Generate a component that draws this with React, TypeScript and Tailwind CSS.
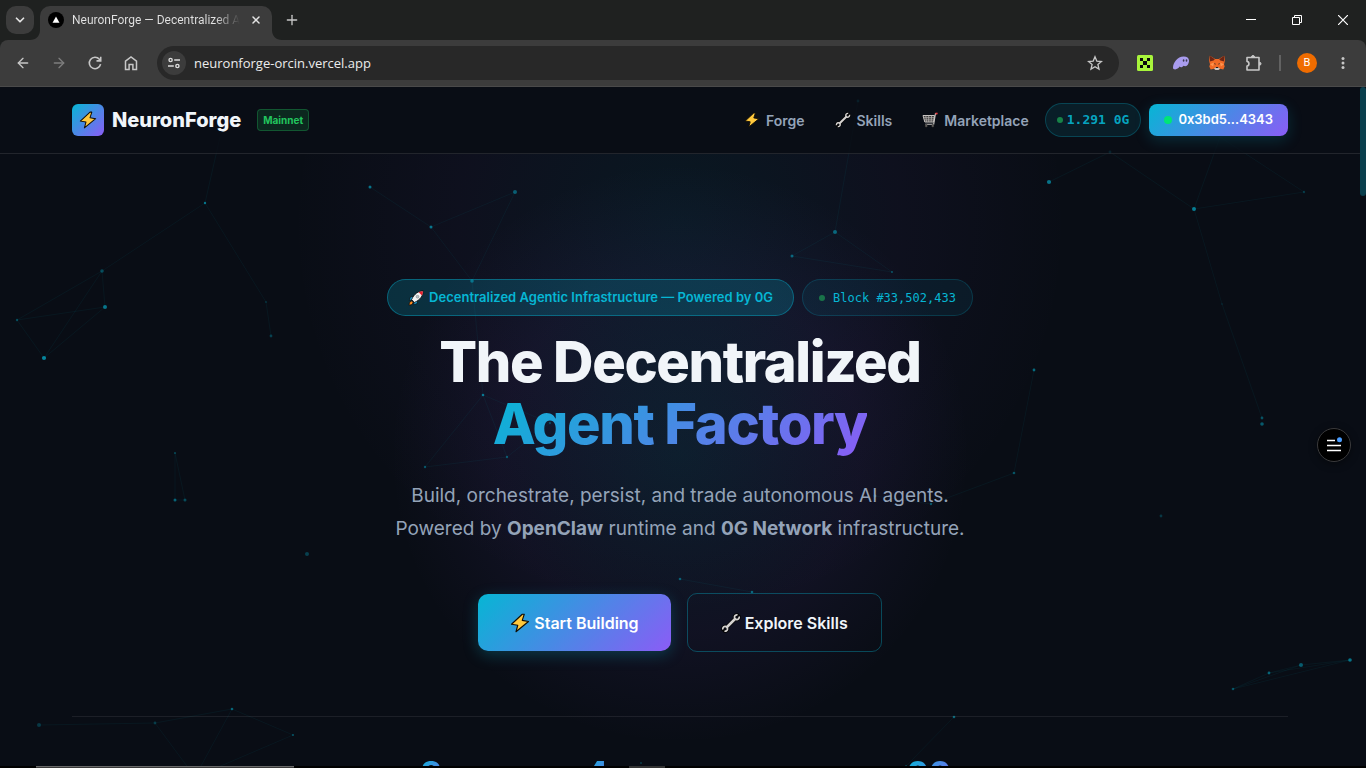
import React from 'react';
import { ArrowLeft, ArrowRight, ChevronDown, Plus, X } from 'lucide-react';

type Node = [x: number, y: number, r: number, opacity: number];

const nodes: Record<string, Node> = {
  a: [205, 116, 1.2, 0.6],
  b: [102, 184, 1.8, 0.35],
  c: [105, 220, 2, 0.6],
  d: [17, 233, 1.2, 0.35],
  e: [44, 271, 2.1, 0.7],
  f: [266, 215, 0.8, 0.35],
  g: [271, 249, 1.4, 0.3],
  h: [370, 100, 1.5, 0.6],
  i: [431, 140, 1.5, 0.6],
  j: [515, 105, 2, 0.45],
  k: [472, 194, 1.8, 0.5],
  l: [483, 308, 1.3, 0.6],
  m: [425, 380, 1.2, 0.4],
  n: [507, 370, 1.2, 0.4],
  o: [550, 336, 1.2, 0.3],
  p: [175, 366, 1, 0.35],
  q: [175, 413, 1.5, 0.5],
  r: [185, 413, 1.5, 0.35],
  s: [307, 467, 2, 0.3],
  t: [858, 14, 1.4, 0.4],
  u: [835, 145, 2, 0.5],
  v: [792, 169, 1.5, 0.5],
  w: [892, 185, 1, 0.4],
  x: [1049, 95, 2.1, 0.6],
  y: [1110, 65, 1.4, 0.5],
  z: [1194, 122, 2, 0.65],
  aa: [1304, 105, 1.2, 0.25],
  ab: [1222, 217, 0.8, 0.2],
  ac: [1034, 283, 1.4, 0.55],
  ad: [1014, 386, 1.3, 0.4],
  ae: [1262, 331, 1.4, 0.4],
  af: [1262, 337, 1.8, 0.45],
  ag: [1161, 429, 1.4, 0.25],
  ah: [875, 409, 1.4, 0.5],
  ai: [931, 417, 1.2, 0.4],
  aj: [39, 638, 2, 0.25],
  ak: [155, 636, 1.4, 0.25],
  al: [232, 622, 1.3, 0.5],
  am: [293, 648, 1.1, 0.4],
  an: [680, 492, 1.3, 0.45],
  ao: [752, 505, 1.3, 0.5],
  ap: [1233, 602, 1.3, 0.4],
  aq: [1269, 586, 1.4, 0.5],
  ar: [1301, 578, 2, 0.45],
  as: [1350, 573, 1.8, 0.6],
  at: [954, 630, 1.3, 0.5],
  au: [906, 679, 1, 0.3],
  av: [641, 676, 1.1, 0.25],
  aw: [195, 690, 1, 0],
  ax: [220, 50, 1, 0],
  ay: [1220, 50, 1, 0],
};

const links = [
  'a-b', 'a-f', 'a-ax', 'b-c', 'b-d', 'b-e', 'c-d', 'c-e', 'd-e', 'f-g',
  'h-i', 'i-j', 'i-k', 'j-k', 'k-l', 'l-m', 'l-n', 'l-o', 'm-n', 'n-o', 'p-q', 'p-r',
  'q-r', 't-u', 'u-v', 'u-w', 'v-w', 'x-y', 'y-z', 'z-aa', 'z-ay', 'ay-aa',
  'z-ab', 'ab-ae', 'ac-ad', 'ad-ai', 'ah-ai', 'aj-ak', 'ak-al', 'al-am', 'ak-aw',
  'al-aw', 'am-aw', 'an-ao', 'ap-aq', 'aq-ar', 'ar-as', 'ap-ar', 'ap-as', 'aq-as', 'at-au',
];

function Particles() {
  return (
    <svg className="pointer-events-none absolute inset-0 h-full w-full" aria-hidden="true">
      {links.map((link) => {
        const [from, to] = link.split('-').map((id) => nodes[id]);
        return (
          <line
            key={link}
            x1={from[0]}
            y1={from[1]}
            x2={to[0]}
            y2={to[1]}
            stroke="#06b6d4"
            strokeOpacity="0.06"
          />
        );
      })}
      {Object.entries(nodes).map(([id, [x, y, r, opacity]]) => (
        <circle key={id} cx={x} cy={y} r={r} fill="#06b6d4" fillOpacity={opacity} />
      ))}
    </svg>
  );
}

function Bolt({ className = 'h-4 w-4' }: { className?: string }) {
  return (
    <svg viewBox="0 0 16 16" className={className} aria-hidden="true">
      <path
        d="M9.800 1 1.200 9l5 .8L4.800 15l10-8.200-5-.9L11.400 1z"
        fill="#ffc83d"
        stroke="#120d04"
        strokeWidth="0.9"
        strokeLinejoin="round"
      />
    </svg>
  );
}

function Wrench({ className = 'h-4 w-4' }: { className?: string }) {
  const jaws = 'M13.200 1.500A1.900 1.900 0 1 0 14.500 2.800M1.500 13.200A1.900 1.900 0 1 1 2.800 14.500';
  return (
    <svg viewBox="0 0 16 16" className={className} fill="none" aria-hidden="true">
      <path d="M4 12 12 4" stroke="#050505" strokeWidth="3.200" />
      <path d={jaws} stroke="#050505" strokeWidth="2.600" strokeLinecap="round" />
      <path d={jaws} stroke="#d6d3d1" strokeWidth="1.400" />
      <path d="M4.200 11.800 11.800 4.200" stroke="#d6d3d1" strokeWidth="2" />
    </svg>
  );
}

function Cart({ className = 'h-4 w-4' }: { className?: string }) {
  return (
    <svg viewBox="0 0 16 16" className={className} fill="none" aria-hidden="true">
      <path d="M1 3.500h11.500L11.600 10H2.800z" fill="#3a3a3a" stroke="#c9c5c2" />
      <path d="M1.600 5.700h10.700M2.200 7.900h9.700M3.800 3.500l.7 6.500M6.700 3.500V10M9.600 3.500 9.100 10" stroke="#b3afac" strokeWidth="0.8" />
      <path d="M15 1.800h-1.600L11.700 12.200H3.300" stroke="#c9c5c2" strokeWidth="1.100" />
      <path d="M15.600 1.500h-2.100" stroke="#f03a3e" strokeWidth="1.600" />
      <circle cx="4.200" cy="13.900" r="1.300" fill="#6b6866" stroke="#111" strokeWidth="0.5" />
      <circle cx="10.800" cy="13.900" r="1.300" fill="#6b6866" stroke="#111" strokeWidth="0.5" />
    </svg>
  );
}

function Rocket({ className = 'h-4 w-4' }: { className?: string }) {
  return (
    <svg viewBox="0 0 16 16" className={className} aria-hidden="true">
      <path d="M3.500 11 1.500 12.500 1 15.200 3.800 14.600 5.200 12.600z" fill="#ff8a1f" stroke="#0b0b0b" strokeWidth="0.7" />
      <path d="M5.500 6.200 2.300 7.300 1.300 10.500 4.500 9.700zM9.900 10.600 8.800 13.700 5.600 14.700 6.400 11.600z" fill="#19a9e5" stroke="#0b0b0b" strokeWidth="0.7" />
      <path d="M15.200.9C10.500.8 6 4 3.600 9.600L6.500 12.400C12 10 15.300 5.600 15.200.9z" fill="#f3f3f3" stroke="#0b0b0b" strokeWidth="0.8" />
      <path d="M14.900 1.200c-1.500-.1-2.900.3-4.200 1l3.200 3.200c.7-1.300 1.100-2.700 1-4.200z" fill="#e8202e" />
      <circle cx="9.500" cy="6.700" r="1.400" fill="#b9c2c9" stroke="#777" strokeWidth="0.5" />
    </svg>
  );
}

function WindowBar() {
  return (
    <div className="flex h-10 shrink-0 bg-[#1f2120] pl-[6px]">
      <button aria-label="Search tabs" className="mt-[6px] flex h-7 w-7 items-center justify-center rounded-[10px] bg-[#3c3c3c] text-[#e3e3e3]">
        <ChevronDown className="h-[14px] w-[14px]" strokeWidth={3} />
      </button>
      <div className="relative ml-[6px] mt-[6px] flex w-[232px] items-center rounded-t-[10px] bg-[#3c3c3c] pl-2 pr-2 pb-[6px]">
        <svg className="absolute -left-[10px] bottom-0 h-[10px] w-[10px]" viewBox="0 0 10 10" aria-hidden="true">
          <path d="M10 0v10H0C6 10 10 6 10 0z" fill="#3c3c3c" />
        </svg>
        <svg className="absolute -right-[10px] bottom-0 h-[10px] w-[10px]" viewBox="0 0 10 10" aria-hidden="true">
          <path d="M0 0v10h10C4 10 0 6 0 0z" fill="#3c3c3c" />
        </svg>
        <svg viewBox="0 0 16 16" className="h-4 w-4 shrink-0" aria-hidden="true">
          <circle cx="8" cy="8" r="8" fill="#000" />
          <path d="M8 4.500 11.500 10.800h-7z" fill="#fff" />
        </svg>
        <span className="ml-2 flex-1 overflow-hidden whitespace-nowrap bg-linear-to-r from-[#e3e3e3] from-85% to-transparent bg-clip-text font-[Roboto,sans-serif] text-[12px] leading-4 text-transparent">
          NeuronForge — Decentralized A
        </span>
        <button aria-label="Close tab" className="ml-2 flex h-4 w-4 items-center justify-center text-[#e3e3e3]">
          <X className="h-3 w-3" strokeWidth={3} />
        </button>
      </div>
      <button aria-label="New tab" className="ml-[6px] flex h-10 w-7 items-center justify-center text-[#c7c7c7]">
        <Plus className="h-4 w-4" strokeWidth={2} />
      </button>
      <div className="ml-auto flex text-white">
        <button aria-label="Minimize" className="flex h-10 w-[46px] items-center justify-center">
          <svg viewBox="0 0 10 10" className="h-[10px] w-[10px]"><path d="M0 4.500h10" stroke="currentColor" /></svg>
        </button>
        <button aria-label="Restore" className="flex h-10 w-[46px] items-center justify-center">
          <svg viewBox="0 0 10 10" className="h-[10px] w-[10px]" fill="none" stroke="currentColor">
            <path d="M.5 2.500h7v7h-7zM2.500 2.500v-2h7v7h-2" />
          </svg>
        </button>
        <button aria-label="Close" className="flex h-10 w-[46px] items-center justify-center">
          <svg viewBox="0 0 10 10" className="h-[10px] w-[10px]"><path d="M0 0l10 10M10 0 0 10" stroke="currentColor" strokeWidth="1.200" /></svg>
        </button>
      </div>
    </div>
  );
}

const toolButton = 'flex h-9 w-9 shrink-0 items-center justify-center text-[#c7c7c7]';

function Toolbar() {
  return (
    <div className="shrink-0 bg-[#1f2120]">
      <div className="flex h-[47px] items-center rounded-t-lg border-b border-[#4a4a4a] bg-[#3c3c3c] px-[5px] font-['Open_Sans',sans-serif]">
        <button aria-label="Back" className={toolButton}>
          <ArrowLeft className="h-4 w-4" strokeWidth={2} />
        </button>
        <button aria-label="Forward" className="flex h-9 w-9 shrink-0 items-center justify-center text-[#7d7d7d]">
          <ArrowRight className="h-4 w-4" strokeWidth={2} />
        </button>
        <button aria-label="Reload" className={toolButton}>
          <svg viewBox="0 0 16 16" className="h-4 w-4" fill="none" stroke="currentColor" strokeWidth="1.600">
            <path d="M13.600 9.200A5.700 5.700 0 1 1 12.400 4.300L13.600 5.600" />
            <path d="M13.700 1.800v4.100H9.500" />
          </svg>
        </button>
        <button aria-label="Home" className={toolButton}>
          <svg viewBox="0 0 16 16" className="h-4 w-4" fill="none" stroke="currentColor" strokeWidth="1.500">
            <path d="M2.500 6.200 8 1.900l5.500 4.300v8.300H9.900V9.600H6.100v4.900H2.500z" />
          </svg>
        </button>
        <div className="mx-2 flex h-[34px] flex-1 items-center rounded-full bg-[#282828] pl-[5px]">
          <button aria-label="View site information" className="flex h-6 w-6 items-center justify-center rounded-full bg-[#3c3c3c] text-[#dcdcdc]">
            <svg viewBox="0 0 14 14" className="h-[14px] w-[14px]" fill="none" stroke="currentColor" strokeWidth="1.400">
              <circle cx="3.600" cy="4" r="1.600" />
              <path d="M7.200 4H13M1 10h5.800" />
              <circle cx="10.400" cy="10" r="1.600" />
            </svg>
          </button>
          <input
            aria-label="Address"
            defaultValue="neuronforge-orcin.vercel.app"
            className="ml-2 h-6 min-w-0 flex-1 bg-transparent text-[13px] text-[#ececec] outline-none"
          />
          <button aria-label="Bookmark this tab" className="mr-[6px] flex h-9 w-9 items-center justify-center text-[#c7c7c7]">
            <svg viewBox="0 0 16 16" className="h-4 w-4" fill="none" stroke="currentColor" strokeWidth="1.300" strokeLinejoin="miter">
              <path d="m8 1.800 1.800 4.300 4.700.4-3.600 3 1.100 4.600L8 11.700l-4 2.400 1.100-4.600-3.600-3 4.700-.4z" />
            </svg>
          </button>
        </div>
        <button aria-label="OKX Wallet" className={toolButton}>
          <svg viewBox="0 0 16 16" className="h-4 w-4" aria-hidden="true">
            <rect width="16" height="16" rx="1.500" fill="#a8f53b" />
            <path d="M3 3h3v3H3zM10 3h3v3h-3zM3 10h3v3H3zM10 10h3v3h-3zM6 6h4v4H6z" fill="#0a0a0a" />
          </svg>
        </button>
        <button aria-label="Phantom" className={toolButton}>
          <svg viewBox="0 0 16 16" className="h-4 w-4" aria-hidden="true">
            <path
              d="M0 12.800C.2 7.300 4.400 1.600 10.600 1.400c3.700-.1 5.600 1.900 5.400 4.800-.2 3-2.200 5-3.900 5-.7 0-1.200-.2-1.500-.5-.6.9-1.500 1.500-2.500 1.500-.7 0-1.200-.2-1.500-.6-1.100 1.700-2.700 2.800-4.400 2.800C.8 14.400 0 13.900 0 12.800z"
              fill="#a99cee"
            />
            <ellipse cx="10.600" cy="5.500" rx=".8" ry="1.200" fill="#3b3850" />
            <ellipse cx="13.500" cy="5.500" rx=".8" ry="1.200" fill="#3b3850" />
          </svg>
        </button>
        <button aria-label="MetaMask" className={toolButton}>
          <svg viewBox="0 0 16 16" className="h-4 w-4" aria-hidden="true">
            <path d="m.8.800 5.400 3.300h3.600L15.200.8 16 5.500l-1 3.700.7 2.300-1.400 3-3.300-.8-1.700 1.400H6.700L5 13.700l-3.300.8-1.400-3L1 9.200 0 5.500z" fill="#f26a25" />
            <path d="M.8.800 5.800 4.200 4.600 5.600.8 6.600zM15.200.8 10.200 4.200 11.400 5.600l3.800 1z" fill="#6b2515" />
            <path d="m5 7.600-4 1.600 3.200 2.200zM11 7.600l4 1.600-3.200 2.200z" fill="#ff9550" />
            <path d="m4.700 8.300 2 .5-.4 1zM11.300 8.300l-2 .5.400 1z" fill="#23252c" />
            <path d="m5 13.700 1.500-1.200h3l1.500 1.200-1.700 1.400H6.700z" fill="#c9c6c4" />
            <path d="M6.600 11.900h2.800l-.4 1H7z" fill="#1d1d1f" />
          </svg>
        </button>
        <button aria-label="Extensions" className={toolButton}>
          <svg viewBox="0 0 18 18" className="h-[18px] w-[18px]" fill="none" stroke="currentColor" strokeWidth="1.600" aria-hidden="true">
            <path d="M3 3.500h12v12.500H3v-4c2.600-.2 2.600-4.300 0-4.500z" strokeLinejoin="round" />
            <path d="M7.500 3a1.500 1.500 0 0 1 3 0zM15.500 8.200a1.500 1.500 0 0 1 0 3z" fill="currentColor" strokeWidth="1" />
          </svg>
        </button>
        <div className="mx-2 h-4 w-[2px] bg-[#626262]" />
        <button aria-label="Profile" className={toolButton}>
          <span className="flex h-5 w-5 items-center justify-center rounded-full bg-[#ef6c00] font-[Roboto,sans-serif] text-[11px] text-white">B</span>
        </button>
        <button aria-label="Menu" className={toolButton}>
          <svg viewBox="0 0 4 14" className="h-[14px] w-1" fill="currentColor" aria-hidden="true">
            <circle cx="2" cy="2.500" r="1.500" />
            <circle cx="2" cy="7" r="1.500" />
            <circle cx="2" cy="11.500" r="1.500" />
          </svg>
        </button>
      </div>
    </div>
  );
}

function SiteHeader() {
  return (
    <header className="border-b border-white/10 bg-[#090d15]/75">
      <div className="mx-auto flex h-[66px] max-w-[1280px] items-center justify-between px-8">
        <a href="#" className="flex items-center">
          <span className="flex h-8 w-8 items-center justify-center rounded-md bg-[linear-gradient(135deg,#06b6d4,#8b5cf6)]">
            <Bolt className="h-[18px] w-[18px]" />
          </span>
          <span className="ml-2 text-[20px] font-extrabold leading-8 text-[#f1f5f9]">NeuronForge</span>
          <span className="ml-4 flex h-[22px] items-center rounded-[4px] border border-[#22c55e]/30 bg-[#22c55e]/15 px-[5px] text-[10px] font-bold text-[#22c55e]">
            Mainnet
          </span>
        </a>
        <nav className="flex items-center text-[14px] font-semibold text-[#94a3b8]">
          <a href="#forge" className="flex items-center gap-[6px]">
            <Bolt />
            Forge
          </a>
          <a href="#skills" className="ml-[30px] flex items-center gap-[6px]">
            <Wrench />
            Skills
          </a>
          <a href="#marketplace" className="ml-[30px] flex items-center gap-[6px]">
            <Cart />
            Marketplace
          </a>
          <span className="ml-4 flex h-[34px] items-center gap-1 rounded-full border border-[#06b6d4]/25 bg-[#06b6d4]/10 px-[11px] font-['DejaVu_Sans_Mono',monospace] text-[13px] font-semibold text-[#06b6d4]/90">
            <span className="h-[6px] w-[6px] rounded-full bg-[#22c55e]/60" />
            1.291 0G
          </span>
          <button className="ml-2 flex h-8 items-center gap-[6px] rounded-lg bg-[linear-gradient(135deg,#06b6d4,#8b5cf6)] px-[15px] text-[13px] font-semibold text-white shadow-[0_4px_15px_rgba(6,182,212,0.2)]">
            <span className="h-2 w-2 rounded-full bg-[#00e676]" />
            0x3bd5...4343
          </button>
        </nav>
      </div>
    </header>
  );
}

const stats = ['8', '4', '', '00'];

function Hero() {
  return (
    <main className="mx-auto flex max-w-[1280px] flex-col items-center px-8 pt-[125px]">
      <div className="flex gap-2">
        <span className="flex h-[37px] items-center gap-[5px] rounded-full border border-[#06b6d4]/40 bg-[#06b6d4]/20 px-5 text-[13px] font-semibold text-[#06b6d4]">
          <Rocket />
          Decentralized Agentic Infrastructure — Powered by 0G
        </span>
        <span className="flex h-[37px] items-center gap-2 rounded-full border border-[#06b6d4]/20 bg-[#06b6d4]/8 px-4 font-['DejaVu_Sans_Mono',monospace] text-[12px] text-[#06b6d4]">
          <span className="h-[6px] w-[6px] rounded-full bg-[#22c55e]/50" />
          Block #33,502,433
        </span>
      </div>
      <h1 className="mt-[15px] text-center text-[56px] font-extrabold leading-[62px] tracking-tight text-[#f1f5f9]">
        The Decentralized
        <br />
        <span className="bg-[linear-gradient(135deg,#06b6d4,#8b5cf6)] bg-clip-text text-transparent">Agent Factory</span>
      </h1>
      <p className="mt-6 text-center text-[19px] leading-[33px] text-[#94a3b8]">
        Build, orchestrate, persist, and trade autonomous AI agents.
        <br />
        Powered by <strong>OpenClaw</strong> runtime and <strong>0G Network</strong> infrastructure.
      </p>
      <div className="mt-12 flex items-center gap-4">
        <button className="flex h-[57px] items-center gap-1 rounded-[10px] bg-[linear-gradient(135deg,#06b6d4,#8b5cf6)] px-8 text-[16px] font-semibold text-white shadow-[0_4px_15px_rgba(6,182,212,0.25)]">
          <Bolt className="h-5 w-5" />
          Start Building
        </button>
        <button className="flex h-[59px] items-center gap-1 rounded-[10px] border border-[#06b6d4]/35 px-[33px] text-[16px] font-semibold text-[#f1f5f9]">
          <Wrench className="h-5 w-5" />
          Explore Skills
        </button>
      </div>
      <div className="mt-16 flex w-full justify-center border-t border-white/8 pt-[41px]">
        {stats.map((value, i) => (
          <div key={i} className="flex w-[166px] justify-center">
            <span className="bg-[linear-gradient(135deg,#06b6d4,#8b5cf6)] bg-clip-text text-[32px] font-extrabold leading-8 text-transparent">
              {value}
            </span>
          </div>
        ))}
      </div>
    </main>
  );
}

export default function App() {
  return (
    <div className="flex h-screen flex-col overflow-hidden bg-black">
      <WindowBar />
      <Toolbar />
      <div className="relative flex min-h-0 flex-1 overflow-hidden bg-[#090d15] font-[Inter,sans-serif]">
        <div className="relative h-full flex-1 overflow-hidden">
          <div className="absolute inset-x-0 bottom-0 top-[67px] bg-[radial-gradient(circle_at_50%_70px,rgba(6,182,212,0.065)_0,rgba(139,92,246,0.04)_220px,transparent_390px),radial-gradient(circle_at_50%_300px,rgba(6,182,212,0.09)_0,rgba(139,92,246,0.06)_180px,transparent_290px)]" />
          <Particles />
          <div className="relative">
            <SiteHeader />
            <Hero />
          </div>
        </div>
        <div className="w-[6px] shrink-0">
          <div className="h-[109px] rounded-full bg-[#0a3f4d]" />
        </div>
        <button
          aria-label="Open side menu"
          className="absolute right-[15px] top-[341px] flex h-[34px] w-[34px] items-center justify-center rounded-full border border-[#3a3a3c] bg-black shadow-[0_2px_8px_rgba(0,0,0,0.4)]"
        >
          <svg viewBox="0 0 16 16" className="h-4 w-4" aria-hidden="true">
            <path d="M1 3.500h8M1 8.500h14M1 13.500h14" stroke="#fff" strokeWidth="1.400" />
            <circle cx="13.500" cy="2.800" r="2.500" fill="#4a9dff" />
          </svg>
        </button>
      </div>
      <div className="flex h-[2px] shrink-0 bg-black pl-9">
        <div className="w-[258px] border-t border-[#6a6a6a] bg-[#3a3a3a]" />
        <div className="ml-[335px] w-9 bg-[#333333]" />
      </div>
    </div>
  );
}
